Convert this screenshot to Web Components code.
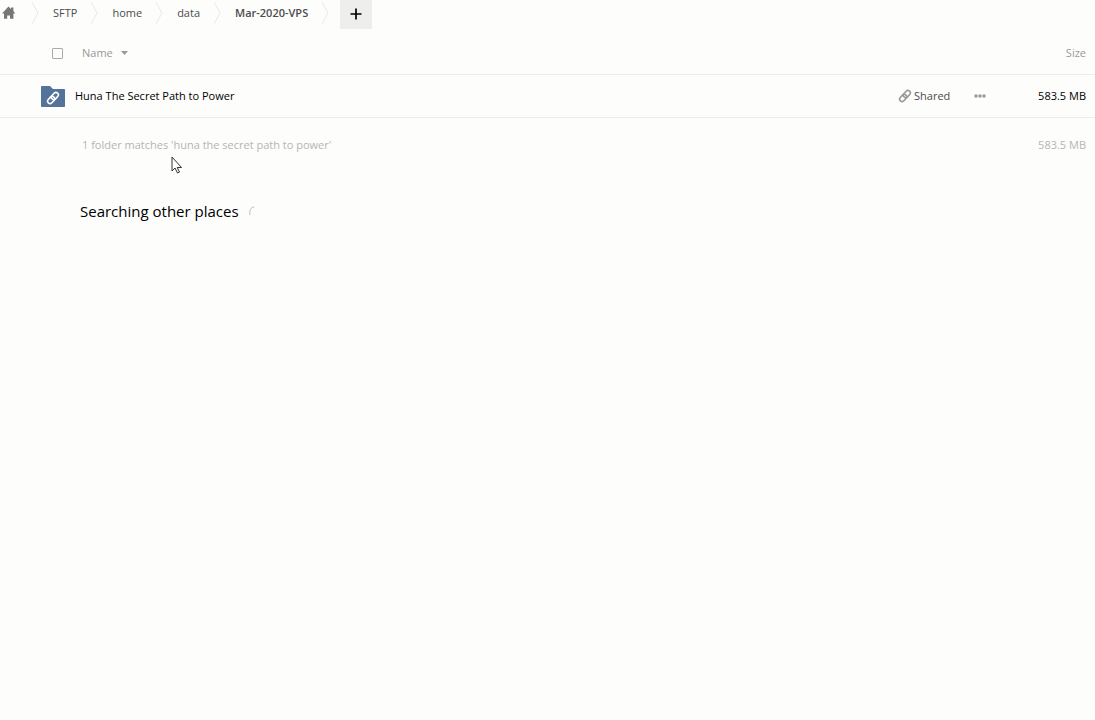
<!DOCTYPE html>
<html lang="en">
<head>
<meta charset="utf-8">
<title>Files</title>
<style>
html, body { margin: 0; min-height: 100%; background: #fdfdfc; }
body { font: 11px/20px "Open Sans", sans-serif; color: #000; }
</style>
</head>
<body>
<files-app></files-app>
<script>
function define(name, html) {
  const template = document.createElement('template');
  template.innerHTML = html;
  customElements.define(name, class extends HTMLElement {
    constructor() {
      super();
      this.attachShadow({ mode: 'open' }).append(template.content.cloneNode(true));
    }
  });
}

define('home-icon', `
<style>:host{display:block;width:14px;height:14px}svg{display:block}</style>
<svg width="14" height="14" viewBox="0 0 14 14" aria-hidden="true"><path fill="#777" d="M6.500 .6 9 2.900V1.400h2.400v3.700L13.300 7.400H11.400V12.800H8V9.500H5.200v3.300H2V7.400H0z"/></svg>`);

define('link-icon', `
<style>:host{display:block;width:14px;height:14px}svg{display:block}</style>
<svg width="14" height="14" viewBox="0 0 14 14" fill="none" stroke="currentColor" stroke-width="1.600" aria-hidden="true"><g transform="rotate(-47 7 7)"><rect x=".3" y="4.600" width="8" height="4.800" rx="2.400"/><rect x="5.700" y="4.600" width="8" height="4.800" rx="2.400"/></g></svg>`);

define('folder-icon', `
<style>:host{display:grid;width:24px;height:21px;color:#fff}svg,link-icon{grid-area:1/1}link-icon{justify-self:center;align-self:end;padding-bottom:2px}</style>
<svg width="24" height="21" viewBox="0 0 24 21" aria-hidden="true"><path fill="#54739a" d="M0 .8Q0 0 .8 0H9l3 3h11.200q.8 0 .8.8v16.400q0 .8-.8.8H.8Q0 21 0 20.200z"/></svg>
<link-icon></link-icon>`);

define('crumb-item', `
<style>
:host{display:flex;align-items:center;height:26px;color:#4c4c4c}
.label{display:flex;align-items:center}
svg{display:block;margin:0 13px 0 14px}
</style>
<span class="label"><slot></slot></span>
<svg width="8" height="22" viewBox="0 0 8 22" fill="none" stroke="#e8e8e6" aria-hidden="true"><path d="M0 0 6 11 0 22"/></svg>`);

define('path-bar', `
<style>
:host{display:block}
nav{display:flex;align-items:flex-start;height:32px;padding-left:2px}
a{color:inherit;text-decoration:none}
.home{padding-right:2px}
.current{font-weight:600}
button{width:32px;height:29px;margin-left:-3px;padding:0 0 1px;border:0;background:#eeeeed;display:grid;place-items:center}
svg{display:block}
</style>
<nav aria-label="Path">
<crumb-item><a class="home" href="#root" aria-label="Home"><home-icon></home-icon></a></crumb-item>
<crumb-item><a href="#sftp">SFTP</a></crumb-item>
<crumb-item><a href="#home">home</a></crumb-item>
<crumb-item><a href="#data">data</a></crumb-item>
<crumb-item><a class="current" href="#vps">Mar-2020-VPS</a></crumb-item>
<button type="button" aria-label="New"><svg width="12" height="12" viewBox="0 0 12 12" stroke="#000" stroke-width="1.700"><path d="M6 .5v11M.5 6h11"/></svg></button>
</nav>`);

define('file-table', `
<style>
:host{display:block}
table{width:100%;border-collapse:collapse;table-layout:fixed}
th,td{padding:0;height:42px;font-weight:400;text-align:left;border-bottom:1px solid #ececea}
.actions{width:101px}
.size{width:96px;text-align:right;padding-right:9px;box-sizing:border-box}
.flex{display:flex;align-items:center}
thead{color:#999}
thead .flex{padding-left:52px}
input{appearance:none;width:11px;height:11px;margin:0 19px 0 0;border:1px solid #aaa;border-radius:1px;box-sizing:border-box}
button{font:inherit;color:inherit;background:none;border:0;padding:0;display:inline-flex;align-items:center;gap:8px}
svg{display:block}
a{color:inherit;text-decoration:none}
.file{padding-left:41px;gap:10px}
.shared{color:#4c4c4c;gap:24px}
.share{gap:2px}
link-icon{color:#999}
tfoot{color:#b5b5b4}
tfoot td{height:54px;border:0}
tfoot .note{padding-left:82px}
</style>
<table>
<thead><tr>
<th scope="col"><div class="flex"><input type="checkbox" aria-label="Select all"><button type="button">Name <svg width="7" height="4" viewBox="0 0 7 4" aria-hidden="true"><path fill="#999" d="M0 0h7L3.500 4z"/></svg></button></div></th>
<th class="actions"></th>
<th class="size" scope="col"><button type="button">Size</button></th>
</tr></thead>
<tbody><tr>
<td><div class="flex file"><folder-icon></folder-icon><a href="#huna">Huna The Secret Path to Power</a></div></td>
<td class="actions"><div class="flex shared"><button class="share" type="button"><link-icon></link-icon>Shared</button><button type="button" aria-label="More actions"><svg width="12" height="4" viewBox="0 0 12 4" fill="#999"><circle cx="2" cy="2" r="1.700"/><circle cx="6" cy="2" r="1.700"/><circle cx="10" cy="2" r="1.700"/></svg></button></div></td>
<td class="size">583.5 MB</td>
</tr></tbody>
<tfoot><tr><td class="note">1 folder matches 'huna the secret path to power'</td><td></td><td class="size">583.5 MB</td></tr></tfoot>
</table>`);

define('search-status', `
<style>
:host{display:flex;align-items:center;gap:10px;padding:27px 0 0 80px;font-size:15px;line-height:24px}
svg{display:block}
</style>
<span role="status"><slot></slot></span>
<svg width="10" height="10" viewBox="0 0 10 10" fill="none" stroke="#bbb" aria-hidden="true"><path d="M1 9C0 5 2 1 5 1"/></svg>`);

define('mouse-pointer', `
<style>:host{display:block;position:absolute;left:171px;top:156px;pointer-events:none}svg{display:block}</style>
<svg width="12" height="19" viewBox="0 0 12 19" aria-hidden="true"><path fill="#fff" stroke="#333" d="M1 1v14l3-3 2.500 5 2-1-2.300-4.500H10.500z"/></svg>`);

define('files-app', `
<style>:host{display:block;position:relative}main{display:block}</style>
<path-bar></path-bar>
<main><file-table></file-table><search-status>Searching other places</search-status></main>
<mouse-pointer></mouse-pointer>`);
</script>
</body>
</html>
